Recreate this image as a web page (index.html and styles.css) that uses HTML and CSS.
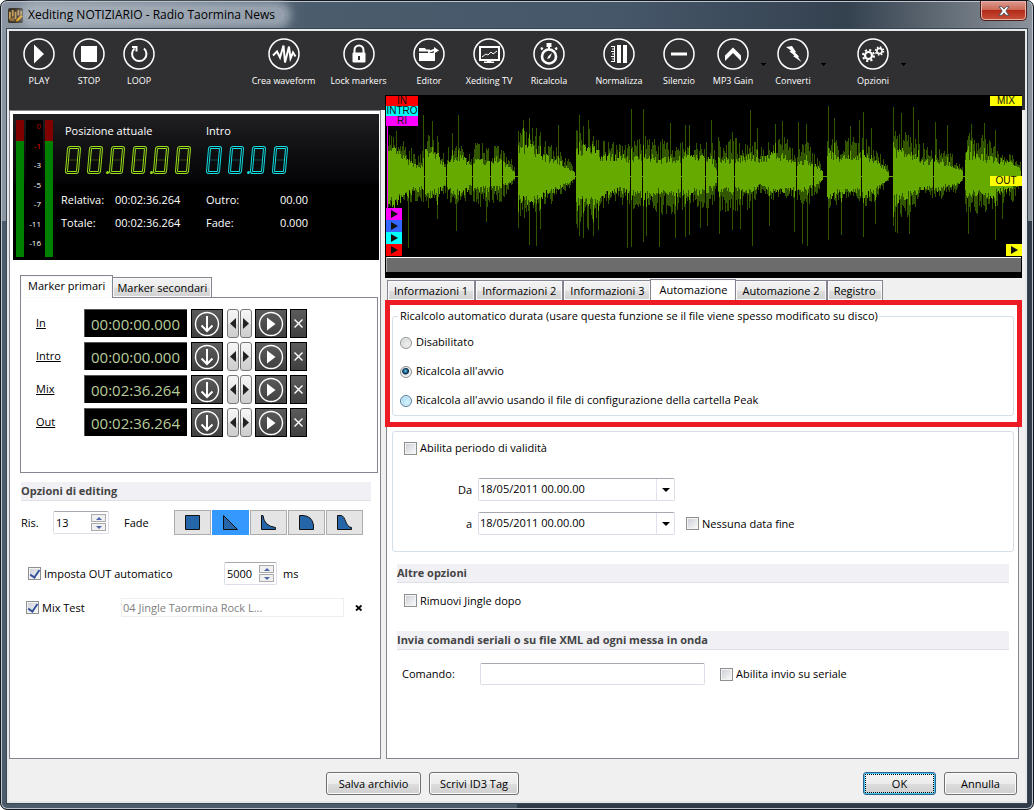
FILE: index.html
```html
<!DOCTYPE html>
<html lang="it">
<head>
<meta charset="utf-8">
<title>Xediting NOTIZIARIO - Radio Taormina News</title>
<link rel="stylesheet" href="styles.css">
</head>
<body>
<div class="window">
  <header class="titlebar">
    <svg class="app-icon" viewBox="0 0 16 16" aria-hidden="true"><rect width="16" height="16" rx="2" fill="#3b342b"/><path d="M1 4h2v8H1zM4 2h2v7H4zM7 4h2v8H7zM10 2h2v6h-2zM13 3h2v5h-2z" fill="#c99f5c"/><path d="M2 10h5v4H2z" fill="#8d7040"/><path d="M8 15l1-3 5-5 2 2-5 5z" fill="#f7b21c" stroke="#3b2a10" stroke-width=".6"/></svg>
    <h1 class="title">Xediting NOTIZIARIO - Radio Taormina News</h1>
    <button class="close" type="button" aria-label="Chiudi"><svg viewBox="0 0 12 10"><path d="M1 .7h3l2 2.4L8 .7h3L7.8 5 11 9.3H8L6 6.900l-2 2.400H1L4.200 5z" fill="#fff" stroke="#4a4f5c" stroke-width=".9"/></svg></button>
  </header>

  <div class="client">
    <nav class="toolbar">
      <div class="tools tools-transport">
        <button class="tool" type="button"><svg viewBox="0 0 32 32"><circle cx="16" cy="16" r="15"/><path class="f" d="M11 6.500v19L21 16z"/></svg>PLAY</button>
        <button class="tool" type="button"><svg viewBox="0 0 32 32"><circle cx="16" cy="16" r="15"/><path class="f" d="M8 8h16v16H8z"/></svg>STOP</button>
        <button class="tool" type="button"><svg viewBox="0 0 32 32"><circle cx="16" cy="16" r="15"/><path class="s" d="M21 10.500a7.200 7.200 0 1 1-9.500 0"/><path class="s" d="M9 9h4.500v4.500"/></svg>LOOP</button>
      </div>
      <div class="tools tools-wide">
        <button class="tool" type="button"><svg viewBox="0 0 32 32"><circle cx="16" cy="16" r="15"/><path class="s" d="M5 17.500l4-4 3 6 3.500-12 1.500 17 4-16 1.500 12 2.500-6 2.500 4"/></svg>Crea waveform</button>
        <button class="tool" type="button"><svg viewBox="0 0 32 32"><circle cx="16" cy="16" r="15"/><path class="s" d="M11.500 15v-3a4.500 4.500 0 0 1 9 0v3"/><rect class="f" x="9.500" y="14.500" width="13" height="10" rx="1"/><path d="M15 18h2v4h-2z" fill="#303032"/></svg>Lock markers</button>
      </div>
      <div class="tools">
        <button class="tool" type="button"><svg viewBox="0 0 32 32"><circle cx="16" cy="16" r="15"/><path class="f" d="M6 10h6l1 1.500h4v2H6zM6 15h13l3-1v9H6z"/><path class="s" d="M15 14c2 0 4-2 7-2"/><path class="f" d="M21 9l5 3.500-5 3z"/></svg>Editor</button>
        <button class="tool" type="button"><svg viewBox="0 0 32 32"><circle cx="16" cy="16" r="15"/><path class="s" d="M7 9h19v13H7z"/><path class="t" d="M9 19l4-3 2 1 3-3 2 2 4-3"/><path class="f" d="M14 22h4v2h-4zM11 23.500h10V25H11z"/></svg>Xediting TV</button>
        <button class="tool" type="button"><svg viewBox="0 0 32 32"><circle cx="16" cy="16" r="15"/><circle cx="16" cy="18.500" r="7" style="stroke-width:2.600"/><path class="f" d="M13.500 5h5v4h-5zM8 9l2.500 1L9 12.500 7.500 11zM24 9l-2.500 1 1.500 2.500 1.500-1.500z"/><path class="s" d="M16 8v3"/><path class="f" d="M19 15l-2 5-3 1 1.500-3z"/></svg>Ricalcola</button>
      </div>
      <div class="tools tools-last">
        <button class="tool" type="button"><svg viewBox="0 0 32 32"><circle cx="16" cy="16" r="15"/><path class="f" d="M14 7h4v18h-4zM20 7h4v18h-4z"/><path class="t" d="M11.500 8v16M8 8.500h4M9 11h3M8 13.500h4M9 16h3M8 18.500h4M9 21h3M8 23.500h4"/></svg>Normalizza</button>
        <button class="tool" type="button"><svg viewBox="0 0 32 32"><circle cx="16" cy="16" r="15"/><path class="f" d="M8 14.500h16v3H8z"/></svg>Silenzio</button>
        <button class="tool tool-menu" type="button"><svg viewBox="0 0 32 32"><circle cx="16" cy="16" r="15"/><path class="f" d="M8 17.500L16 9.500l8 8V23l-8-8-8 8z"/></svg>MP3 Gain</button>
        <button class="drop" type="button" aria-label="Menu MP3 Gain"></button>
        <button class="tool tool-menu" type="button"><svg viewBox="0 0 32 32"><circle cx="16" cy="16" r="15"/><path class="f" d="M9 9l6-1 4 6-1 .5 4 4-1 .5 3.500 5-8.500-6 1.500-.5-5-4 1.500-1z"/></svg>Converti</button>
        <button class="drop" type="button" aria-label="Menu Converti"></button>
        <button class="tool tool-menu tool-options" type="button"><svg viewBox="0 0 32 32"><circle cx="16" cy="16" r="15"/><circle cx="11.500" cy="17.500" r="3.500" style="stroke-width:2.200"/><circle cx="11.500" cy="17.500" r="5.500" style="stroke-width:2;stroke-dasharray:2.160 2.160"/><circle cx="22.500" cy="13" r="2.600" style="stroke-width:1.600"/><circle cx="22.500" cy="13" r="4" style="stroke-width:1.500;stroke-dasharray:1.570 1.570"/></svg>Opzioni</button>
        <button class="drop" type="button" aria-label="Menu Opzioni"></button>
      </div>
    </nav>

    <main class="main">
      <section class="left">
        <div class="monitor">
          <div class="meter">
            <div class="bar"></div>
            <ul class="scale"><li class="hot0">0</li><li class="hot">-1</li><li>-3</li><li>-5</li><li>-7</li><li>-11</li><li>-16</li></ul>
            <div class="bar"></div>
          </div>
          <div class="readouts">
            <div class="clocks">
              <div class="clock-title">Posizione attuale</div><div class="clock-title">Intro</div>
              <div class="led led-green" role="img" aria-label="00.00.00"><i></i><i></i><i class="dot"></i><i></i><i></i><i class="dot"></i><i></i><i></i></div>
              <div class="led led-cyan" role="img" aria-label="00.00"><i></i><i></i><i class="dot"></i><i></i><i></i></div>
            </div>
            <dl class="times">
              <dt>Relativa:</dt><dd>00:02:36.264</dd><dt>Outro:</dt><dd class="num">00.00</dd>
              <dt>Totale:</dt><dd>00:02:36.264</dd><dt>Fade:</dt><dd class="num">0.000</dd>
            </dl>
          </div>
        </div>

        <div class="markers">
          <div class="tabs" role="tablist">
            <button class="tab active" role="tab" type="button">Marker primari</button><button class="tab" role="tab" type="button">Marker secondari</button>
          </div>
          <div class="marker-panel" id="markers"></div>
        </div>

        <h2 class="section">Opzioni di editing</h2>
        <div class="row fade-row">
          <label class="w-ris" for="ris">Ris.</label>
          <span class="spin spin-ris"><input id="ris" type="text" value="13"><span class="steps"><button type="button" aria-label="Aumenta"></button><button type="button" aria-label="Riduci"></button></span></span>
          <span class="fade-label">Fade</span>
          <div class="fades">
            <button type="button" aria-label="Nessuna"><svg viewBox="0 0 18 18"><path d="M1.500 1.500h14v14h-14z"/></svg></button>
            <button type="button" class="on" aria-label="Lineare"><svg viewBox="0 0 18 18"><path d="M1.500 1.500v14h14z"/></svg></button>
            <button type="button" aria-label="Esponenziale"><svg viewBox="0 0 18 18"><path d="M1.500 1.500v14h14v-2Q4 12 3 1.500z"/></svg></button>
            <button type="button" aria-label="Logaritmica"><svg viewBox="0 0 18 18"><path d="M1.500 1.500v14h14V11Q14 2 5 1.500z"/></svg></button>
            <button type="button" aria-label="Sigmoide"><svg viewBox="0 0 18 18"><path d="M1.500 1.500v14h14v-2C9 13 10 2 5 1.500z"/></svg></button>
          </div>
        </div>
        <div class="row out-row">
          <label class="check w-out"><input type="checkbox" checked>Imposta OUT automatico</label>
          <span class="spin spin-ms"><input id="ms" type="text" value="5000"><span class="steps"><button type="button" aria-label="Aumenta"></button><button type="button" aria-label="Riduci"></button></span></span>
          <label for="ms">ms</label>
        </div>
        <div class="row mix-row">
          <label class="check w-mix"><input type="checkbox" checked>Mix Test</label>
          <input class="jingle" type="text" value="04 Jingle Taormina Rock L..." aria-label="Jingle" disabled>
          <button class="clear" type="button" aria-label="Rimuovi"><svg viewBox="0 0 8 8"><path d="M1 1.500l5.500 5M6.500 1.500L1 6.500" stroke="#000" stroke-width="1.700"/></svg></button>
        </div>
      </section>

      <section class="right">
        <div class="wave">
          <svg id="wave" viewBox="0 0 634 160" preserveAspectRatio="none" role="img" aria-label="Forma d'onda"></svg>
          <div class="flags flags-start"><span class="flag red">IN</span><span class="flag cyan">INTRO</span><span class="flag magenta">RI</span></div>
          <div class="cues"><button class="cue magenta" type="button" aria-label="RI"></button><button class="cue blue" type="button" aria-label="Hook"></button><button class="cue cyan" type="button" aria-label="Intro"></button><button class="cue red" type="button" aria-label="In"></button></div>
          <span class="flag yellow flag-mix">MIX</span>
          <span class="flag yellow flag-out">OUT</span>
          <button class="cue yellow cue-end" type="button" aria-label="Mix"></button>
        </div>
        <div class="scroll"><div class="thumb"></div></div>

        <div class="tabs tabs-info" role="tablist">
          <button class="tab" role="tab" type="button">Informazioni 1</button><button class="tab" role="tab" type="button">Informazioni 2</button><button class="tab" role="tab" type="button">Informazioni 3</button><button class="tab active" role="tab" type="button">Automazione</button><button class="tab" role="tab" type="button">Automazione 2</button><button class="tab" role="tab" type="button">Registro</button>
        </div>
        <div class="panel">
          <div class="marked">
            <fieldset class="group recalc">
              <legend>Ricalcolo automatico durata (usare questa funzione se il file viene spesso modificato su disco)</legend>
              <label class="radio"><input type="radio" name="r">Disabilitato</label>
              <label class="radio"><input type="radio" name="r" checked>Ricalcola all'avvio</label>
              <label class="radio"><input class="hover" type="radio" name="r">Ricalcola all'avvio usando il file di configurazione della cartella Peak</label>
            </fieldset>
            <div class="frame"></div>
          </div>
          <div class="group validity">
            <label class="check"><input type="checkbox">Abilita periodo di validità</label>
            <div class="dates">
              <label for="da">Da</label><span class="combo"><input id="da" type="text" value="18/05/2011 00.00.00"><button type="button" aria-label="Apri calendario"></button></span><span></span>
              <label for="a">a</label><span class="combo"><input id="a" type="text" value="18/05/2011 00.00.00"><button type="button" aria-label="Apri calendario"></button></span>
              <label class="check"><input type="checkbox">Nessuna data fine</label>
            </div>
          </div>
          <h2 class="section">Altre opzioni</h2>
          <label class="check jingle-check"><input type="checkbox">Rimuovi Jingle dopo</label>
          <h2 class="section">Invia comandi seriali o su file XML ad ogni messa in onda</h2>
          <div class="command">
            <label for="cmd">Comando:</label><input id="cmd" type="text">
            <label class="check"><input type="checkbox">Abilita invio su seriale</label>
          </div>
        </div>
      </section>
    </main>

    <footer class="footer">
      <button class="btn btn-save" type="button">Salva archivio</button>
      <button class="btn btn-tag" type="button">Scrivi ID3 Tag</button>
      <button class="btn btn-ok" type="button">OK</button>
      <button class="btn btn-cancel" type="button">Annulla</button>
    </footer>
  </div>
</div>
<script src="app.js"></script>
</body>
</html>
```
FILE: styles.css
```css
* { box-sizing: border-box; }
body { margin: 0; background: #fff; color: #000; font: 11px/16px "Open Sans", "Noto Sans", sans-serif; }
button, input { font: inherit; color: inherit; margin: 0; padding: 0; }
button { white-space: nowrap; }
h1, h2, ul, dl, dd { margin: 0; padding: 0; }

.window { display: flex; flex-direction: column; min-height: 100vh; padding: 0 6px 6px; border: 1px solid #15181d; border-radius: 7px; box-shadow: inset 0 0 0 1px #b9c4d0;
  background: linear-gradient(90deg, #4b5b6b 0, #4b5b6b 50%, transparent 50%) 0 220px / 100% 100% no-repeat,
    linear-gradient(#0000 220px, #2f3b48 220px),
    linear-gradient(90deg, #8b96a2 0, #4b5c6d 30%, #46576a 60%, #34414f 82%, #6f7881 94%, #8a929b 100%); }
.titlebar { display: flex; align-items: center; height: 28px; padding-left: 1px; }
.app-icon { width: 15px; height: 15px; margin-right: 3px; }
.title { padding: 0 10px 0 2px; border-radius: 12px; background: #b4bdc6b0; box-shadow: 0 0 8px 6px #b4bdc6b0; font-size: 12px; font-weight: 400; }
.close { align-self: flex-start; display: grid; place-items: center; width: 47px; height: 20px; margin-left: auto; border: 1px solid #4b1d1c; border-top: 0; border-radius: 0 0 5px 5px; background: linear-gradient(#dc9c90 0, #cd6a58 45%, #b22b18 50%, #c8513c 100%); box-shadow: inset 0 0 0 1px #e9b3aa; }
.close svg { width: 12px; height: 10px; }

.client { flex: 1; display: flex; flex-direction: column; border: 2px solid #e6e9ec; outline: 1px solid #3c4650; background: #f0f0f0; }

.toolbar { display: flex; height: 64px; padding: 7px 0 0 5px; background: #303032; color: #fff; }
.tools { display: flex; align-items: flex-start; }
.tools-transport { margin-right: 82px; }
.tools-wide { margin-right: 3px; }
.tools-last { margin-left: 10px; }
.tool { display: flex; flex-direction: column; align-items: center; width: 60px; border: 0; background: none; font-size: 9px; line-height: 12px; }
.tool svg { width: 32px; height: 32px; margin-bottom: 5px; }
.tools-transport .tool { width: 50px; }
.tools-wide .tool { width: 75px; }
.tools .tool-menu { width: 48px; }
.tool-options { margin-left: 20px; }
.drop { width: 12px; height: 32px; border: 0; background: linear-gradient(#000, #000) 50% 25px / 5px 1px no-repeat, linear-gradient(#000, #000) 50% 26px / 3px 1px no-repeat, linear-gradient(#000, #000) 50% 27px / 1px 1px no-repeat; }
.tool circle { fill: none; stroke: #fff; stroke-width: 1.5; }
.f { fill: #fff; }
.s { fill: none; stroke: #fff; stroke-width: 2; }
.t { fill: none; stroke: #fff; stroke-width: 1; }

.main { flex: 1; display: grid; grid-template-columns: minmax(340px, 372fr) minmax(500px, 637fr); column-gap: 4px; padding-right: 3px; background: linear-gradient(#303032 15px, #f0f0f0 15px); }
.left { display: flex; flex-direction: column; margin-top: 15px; border: 1px solid #85858f; background: #fff; padding: 3px 0 0 3px; }

.monitor { display: flex; height: 146px; margin-right: 1px; padding: 6px 3px 3px; background: linear-gradient(#202023 0, #0e0e10 40px, #060608 66px, #000 72px); color: #fff; }
.meter { display: flex; gap: 2px; }
.bar { width: 8px; background: linear-gradient(#800000 21px, #008000 21px); }
.scale { display: flex; flex-direction: column; justify-content: space-between; width: 17px; padding: 0 2px 8px 0; background: #000; font-size: 8px; line-height: 12px; list-style: none; text-align: right; }
.hot { color: #f00; }
.hot0 { color: #b00000; }
.readouts { flex: 1; padding: 3px 0 0 8px; }
.clocks { display: grid; grid-template-columns: 141px 1fr; padding-left: 4px; }
.led { display: flex; gap: 8px; height: 28px; margin: 7px 0 0 1px; }
.led i { position: relative; flex: none; width: 14px; height: 28px; border: 3px double; border-radius: 3px; transform: skewX(-5deg); }
.led i:not(.dot)::after { content: ""; position: absolute; inset: 10px 0 auto; height: 2px; background: currentColor; opacity: .15; }
.led-green { color: #9be01a; }
.led-cyan { color: #10e0e4; }
.led .dot { align-self: flex-end; width: 3px; height: 3px; margin: 0 -7px 0 -4px; border: 0; background: currentColor; }
.times { display: grid; grid-template-columns: 54px 91px 50px 52px; row-gap: 7px; margin-top: 18px; }
.num { text-align: right; }

.tabs { display: flex; align-items: flex-end; }
.tab { height: 20px; padding: 0 4px; border: 1px solid #85858f; border-bottom: 0; background: linear-gradient(#f3f3f3 0, #ececec 50%, #dedede 52%, #d2d2d2 100%); box-shadow: inset 0 0 0 1px #fafafa; line-height: 18px; }
.tab.active { position: relative; height: 23px; margin-bottom: -1px; padding: 0 7px 2px; background: #fff; }
.markers { margin: 15px 2px 9px 7px; }
.markers .tab { margin-left: -1px; }
.markers .tab.active { margin-left: 0; }
.marker-panel { display: flex; flex-direction: column; gap: 4px; height: 176px; padding: 11px 15px; border: 1px solid #85858f; }
.marker { display: flex; height: 29px; }
.marker a { width: 48px; color: inherit; line-height: 28px; }
.marker input { width: 103px; height: 28px; padding: 0 0 0 6px; border: 1px solid #555; border-width: 1px 0 0 1px; background: #000; color: #b8cc9c; font-size: 15px; }
.dark { display: grid; place-items: center; width: 32px; height: 29px; margin-left: 4px; border: 1px solid #000; background: linear-gradient(#5c5c5c, #3f3f3f); }
.dark svg { width: 26px; height: 26px; fill: none; stroke: #fff; stroke-width: 1.4; }
.nudges { display: flex; gap: 1px; margin: 0 -1px 0 4px; }
.nudges button { display: grid; place-items: center; width: 12px; height: 29px; border: 1px solid #777; border-radius: 3px; background: linear-gradient(#f6f6f6 0, #e9e9e9 50%, #d8d8d8 52%, #cfcfcf 100%); }
.nudges svg { width: 6px; height: 11px; fill: #222; }
.dark.small { width: 17px; margin-left: 3px; }
.dark.small svg { width: 9px; height: 9px; }

.section { height: 19px; border-bottom: 1px solid #dfe0e6; background: #f0f0f5; color: #444; font-size: 11px; line-height: 18px; font-weight: 700; }
.left .section { margin: 0 9px 0 8px; }
.row { display: flex; align-items: center; }
.fade-row { margin: 9px 0 0 8px; }
.w-ris { width: 32px; }
.spin { display: flex; height: 23px; padding: 2px; border: 1px solid #dcdfe8; border-top-color: #a8a9b0; border-radius: 2px; background: #fff; }
.spin input { flex: 1; min-width: 0; width: 20px; border: 0; background: none; }
.spin-ris { width: 56px; }
.spin-ms { width: 53px; }
.steps { display: flex; flex-direction: column; width: 15px; gap: 1px; }
.steps button { flex: 1; border: 1px solid #aaa; background: #f0f0f0; display: grid; place-items: center; }
.steps button::after { content: ""; border: 3px solid transparent; border-top: 0; border-bottom-color: #5066a8; }
.steps button + button::after { transform: rotate(180deg); }
.fade-label { width: 50px; margin-left: 15px; }
.fades { display: flex; gap: 1px; }
.fades button { display: grid; place-items: center; width: 37px; height: 25px; border: 1px solid #adadad; background: #e4e4e4; }
.fades .on { border-color: #3399ff; background: #3399ff; }
.fades svg { width: 18px; height: 18px; fill: #2566a8; stroke: #111; }
.check, .radio { display: flex; align-items: center; }
.check input { appearance: none; flex: none; width: 13px; height: 13px; margin-right: 3px; padding: 1px; border: 1px solid #8e8f8f; outline: 1px solid #f4f4f4; outline-offset: -2px; background: linear-gradient(135deg, #cdd1d8, #f8f8f8) content-box; }
.check input:checked::after { content: ""; display: block; width: 4px; height: 8px; margin: -1px 0 0 2px; border: solid #35529a; border-width: 0 2px 2px 0; transform: rotate(35deg); }
.out-row { margin: 27px 0 0 15px; }
.w-out { width: 196px; }
.spin-ms + label { margin-left: 6px; }
.mix-row { margin: 13px 0 0 13px; }
.w-mix { width: 95px; }
.jingle { width: 223px; height: 19px; padding-left: 1px; border: 1px solid #eee; background: #fff; color: #808080; }
.clear { width: 8px; height: 8px; margin-left: 11px; border: 0; background: none; display: grid; }

.right { display: flex; flex-direction: column; min-width: 0; }
.wave { position: relative; height: 162px; padding: 1px 1px 1px 2px; background: #000; }
.wave > svg { display: block; width: 100%; height: 160px; shape-rendering: crispEdges; }
.wave .outer { stroke: #325500; }
.wave .inner { stroke: #66aa00; }
.flag { display: block; width: 32px; height: 10px; font: 10px/10px "Liberation Sans", sans-serif; text-align: center; color: #111; }
.flags-start { position: absolute; top: 1px; left: 1px; }
.cues { position: absolute; bottom: 1px; left: 1px; }
.cue { display: block; width: 16px; height: 12px; border: 0; }
.cue::after { content: ""; display: block; margin-left: 5px; width: 0; border: 4px solid transparent; border-left: 7px solid #111; border-right: 0; }
.red { background: #f00; }
.cyan { background: #0ff; }
.magenta { background: #f0f; }
.blue { background: #36f; }
.yellow { background: #ff0; }
.flag-mix { position: absolute; top: 1px; right: 0; }
.flag-out { position: absolute; top: 81px; right: 0; }
.cue-end { position: absolute; right: 0; bottom: 1px; }
.scroll { height: 21px; padding: 0 1px; background: #000; }
.thumb { height: 15px; border-top: 1px solid #fff; border-left: 1px solid #aaa; background: #6c6c6c; }

.tabs-info { margin: 1px 0 0 2px; height: 22px; }
.tabs-info .tab { margin-bottom: 1px; padding: 0 6px; }
.tabs-info .tab.active { height: 22px; margin: 0 -1px; padding: 0 8px 2px; }
.panel { flex: 1; margin: -1px 3px 0 1px; padding: 0 4px 20px 5px; border: 1px solid #85858f; background: #fff; }
.marked { position: relative; padding: 7px 0 11px; }
.frame { position: absolute; inset: -1px -8px 0 -7px; border: 5px solid #ed1c24; pointer-events: none; }
.group { margin: 0; border: 1px solid #d5dfe5; border-radius: 3px; }
.recalc { padding: 10px 7px 7px; }
.recalc legend { margin-left: -2px; padding: 0 1px 0 2px; }
.radio { height: 16px; margin-bottom: 13px; }
.radio:last-child { margin-bottom: 0; }
.radio input { appearance: none; flex: none; width: 12px; height: 12px; margin: 1px 4px 0 0; border: 1px solid #8e8f8f; border-radius: 50%; background: radial-gradient(circle at 60% 60%, #f0f0f0, #c4c8cc); box-shadow: inset 0 0 0 1px #f4f4f4; }
.radio input:checked { background: radial-gradient(circle at 45% 40%, #7fd0f0 0, #17567f 2px, #0c2d48 3px, #e4e8ec 4px); }
.radio .hover { border-color: #4a7f9f; background: radial-gradient(circle at 60% 60%, #d8f4ff, #8ccbea); }
.validity { margin-top: 4px; padding: 8px 11px 16px; }
.dates { display: grid; grid-template-columns: 68px 197px auto; column-gap: 6px; row-gap: 11px; justify-content: start; align-items: center; margin-top: 22px; }
.dates > label:not(.check) { text-align: right; }
.dates .check { margin-left: 5px; }
.combo { display: flex; height: 23px; border: 1px solid #dcdfe8; border-top-color: #a8a9b0; border-radius: 2px; }
.combo input { flex: 1; min-width: 0; padding: 0 0 2px 1px; border: 0; }
.combo button { display: grid; place-items: center; width: 18px; border: 0; border-left: 1px solid #dfe3ee; background: none; }
.combo button::after { content: ""; border: 4px solid transparent; border-top-color: #000; border-bottom: 0; }
.panel .section { margin: 12px 5px 0 5px; }
.jingle-check { margin: 9px 0 0 12px; height: 17px; }
.panel .jingle-check + .section { margin-top: 22px; }
.command { display: flex; align-items: center; margin: 13px 0 0 10px; }
.command > label:first-child { width: 78px; }
.command > input { width: 225px; height: 22px; margin-right: 15px; border: 1px solid #dcdfe8; border-top-color: #a8a9b0; border-radius: 2px; }

.footer { display: flex; height: 42px; padding: 13px 8px 0 317px; }
.btn { height: 23px; border: 1px solid #707070; border-radius: 3px; background: linear-gradient(#f3f3f3 0, #ebebeb 50%, #dddddd 52%, #cfcfcf 100%); box-shadow: inset 0 0 0 1px #fbfbfb; }
.btn-save { width: 95px; }
.btn-tag { width: 90px; margin-left: 8px; }
.btn-ok { width: 73px; margin-left: auto; border-color: #2c628b; box-shadow: inset 0 0 0 1px #43c6f2; outline: 1px dotted #000; outline-offset: -3px; }
.btn-cancel { width: 73px; margin-left: 8px; }
```
FILE: app.js
```js
// Marker rows
var markers = [['In', '00:00:00.000'], ['Intro', '00:00:00.000'], ['Mix', '00:02:36.264'], ['Out', '00:02:36.264']];
document.getElementById('markers').innerHTML = markers.map(function (m) {
  return '<div class="marker"><a href="#">' + m[0] + '</a>' +
    '<input type="text" aria-label="' + m[0] + '" value="' + m[1] + '">' +
    '<button class="dark" type="button" aria-label="Imposta"><svg viewBox="0 0 26 26"><circle cx="13" cy="13" r="11.500"/><path d="M13 5v15M7.500 14.500L13 20l5.500-5.500" stroke-width="2"/></svg></button>' +
    '<span class="nudges"><button type="button" aria-label="Indietro"><svg viewBox="0 0 6 11"><path d="M6 0v11L0 5.500z"/></svg></button>' +
    '<button type="button" aria-label="Avanti"><svg viewBox="0 0 6 11"><path d="M0 0v11l6-5.500z"/></svg></button></span>' +
    '<button class="dark" type="button" aria-label="Ascolta"><svg viewBox="0 0 26 26"><circle cx="13" cy="13" r="11.500"/><path d="M9 6.500v13l8.500-6.500z" fill="#fff" stroke="none"/></svg></button>' +
    '<button class="dark small" type="button" aria-label="Azzera"><svg viewBox="0 0 9 9"><path d="M.5.5l8 8M8.500.5l-8 8"/></svg></button></div>';
}).join('');

// Envelope keyframes: x, inner up, outer up, inner down, outer down
var env = [[0,22,46,28,33],[8,24,44,26,32],[18,16,32,18,26],[28,10,24,14,24],[36,11,24,12,24],[38,23,38,19,30],[50,20,38,17,26],[58,8,22,8,16],
[60,14,26,14,26],[75,18,30,18,26],[84,9,20,10,20],[86,15,32,14,30],[103,13,30,13,28],[110,17,32,12,26],[115,13,26,10,24],[123,8,18,6,12],[128,3,6,2,4],
[131,28,46,22,42],[145,27,44,24,38],[160,17,32,17,28],[172,14,24,12,20],[180,8,18,7,14],[188,3,6,2,4],[189,26,44,22,46],[205,26,44,28,50],[215,18,36,20,32],[230,20,30,14,24],[243,16,32,16,32],
[256,21,38,20,30],[270,16,34,16,34],[285,15,36,18,40],[300,18,34,16,30],[316,18,30,16,32],[325,16,34,12,32],[329,7,14,6,14],[331,16,38,14,34],[346,14,34,14,32],[362,20,40,15,32],[372,15,26,10,16],[385,20,36,14,22],[398,18,38,14,20],
[408,12,26,12,22],[420,14,32,14,30],[430,9,20,8,16],[436,3,6,2,4],[440,22,38,20,34],[455,18,34,16,22],[468,17,36,14,18],[476,22,38,20,30],[486,15,26,16,26],[496,9,20,8,14],[502,3,6,2,4],
[506,24,42,24,44],[520,22,42,20,38],[535,14,30,12,20],[550,14,34,14,22],[560,13,26,10,20],[570,8,14,8,14],[576,4,8,3,6],[579,22,42,18,36],[592,19,38,16,34],[605,16,34,20,34],[615,14,22,14,26],[625,13,24,12,24],[633,7,20,6,14]];
var silence = [[37,37],[59,59],[85,85],[103,103],[115,115],[128,130],[188,188],[243,243],[255,255],[294,294],[318,318],[330,330],[347,347],[409,409],[426,426],[436,439],[474,474],[502,505],[546,546],[576,577]];
// Transients: x, up, down
var peaks = [[21,0,72],[36,61,0],[45,55,0],[50,0,43],[65,43,0],[69,0,55],[71,61,0],[99,0,46],[131,45,52],[136,56,0],[142,58,69],[149,48,70],[153,44,53],[171,51,0],[190,45,52],[192,61,60],[196,50,62],[201,56,54],[206,40,60],[211,0,54],[240,0,72],[244,67,71],[256,67,66],[259,0,60],[272,0,71],[283,53,0],[288,0,62],[298,51,61],[302,51,59],[313,0,52],[320,0,50],[324,56,0],[332,0,58],[345,44,54],[353,0,53],[363,66,0],[365,0,70],[370,48,0],[382,0,50],[388,52,0],[395,55,0],[407,0,56],[411,54,0],[415,0,68],[419,52,0],[420,0,70],[441,70,64],[447,58,0],[454,0,59],[463,50,0],[472,56,0],[476,64,61],[484,48,0],[488,0,48],[506,69,50],[508,45,56],[510,40,57],[514,63,0],[522,0,58],[526,69,0],[531,56,0],[548,54,0],[560,51,0],[581,40,58],[584,52,0],[597,53,0],[608,46,64],[615,0,43]];
var seed = 7;
function rnd() { seed = (seed * 16807) % 2147483647; return seed / 2147483647; }
var outer = '', inner = '', k = 0, mid = 80;
for (var x = 0; x < 634; x++) {
  while (k < env.length - 2 && env[k + 1][0] <= x) k++;
  var a = env[k], b = env[k + 1], t = Math.min(1, (x - a[0]) / (b[0] - a[0]));
  var v = [1, 2, 3, 4].map(function (i) { return a[i] + (b[i] - a[i]) * t; });
  var iu = v[0] * (0.75 + rnd() * 0.5), id = v[2] * (0.75 + rnd() * 0.5);
  var ou = Math.max(iu, v[1] * (0.45 + rnd() * 0.65)), od = Math.max(id, v[3] * (0.45 + rnd() * 0.65));
  peaks.forEach(function (p) { if (p[0] === x) { ou = Math.max(ou, p[1]); od = Math.max(od, p[2]); if (p[1]) iu *= 1.4; if (p[2]) id *= 1.4; } });
  if (silence.some(function (s) { return x >= s[0] && x <= s[1]; })) iu = id = ou = od = 0.5;
  outer += 'M' + (x + 0.5) + ' ' + Math.round(mid - ou) + 'V' + Math.round(mid + od);
  inner += 'M' + (x + 0.5) + ' ' + Math.round(mid - iu) + 'V' + Math.round(mid + id);
}
document.getElementById('wave').innerHTML = '<path class="outer" d="' + outer + '"/><path class="inner" d="' + inner + '"/><path d="M0 30v90" stroke="#f0f"/>';
```
